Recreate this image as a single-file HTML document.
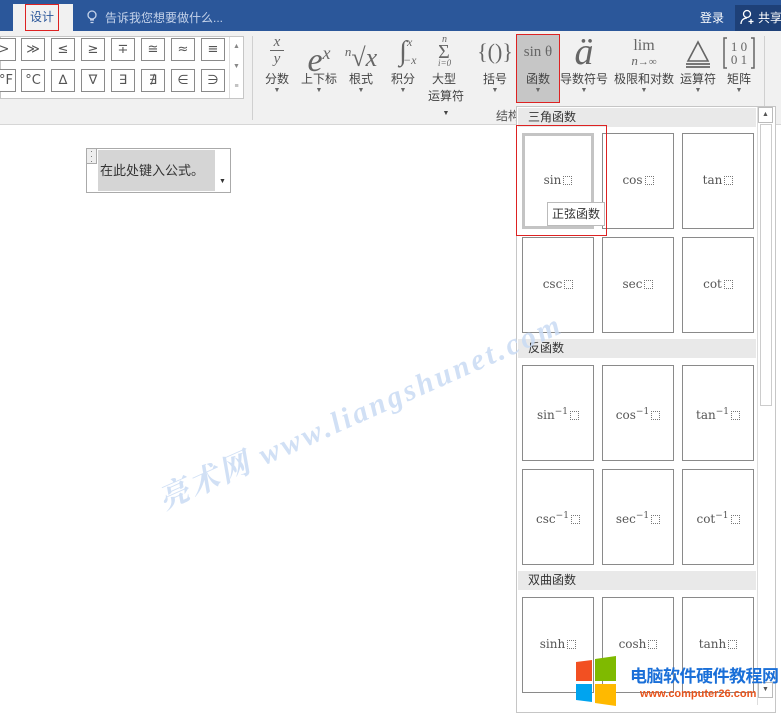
<!DOCTYPE html>
<html><head><meta charset="utf-8"><style>
*{margin:0;padding:0;box-sizing:border-box}
body{width:781px;height:713px;overflow:hidden;position:relative;background:#fff;font-family:"Liberation Sans","Noto Sans CJK SC",sans-serif;font-size:12px;color:#444}
.a{position:absolute}
.sym{position:absolute;width:24px;height:23px;border:1px solid #8a8a8a;background:#fff;text-align:center;line-height:21px;font-size:13px;color:#555;font-family:"DejaVu Sans",sans-serif}
.btn{position:absolute;top:34px;text-align:center;color:#444;font-size:12px}
.btn .ic{height:36px;font-family:"Liberation Serif",serif;color:#666;line-height:36px;position:relative;overflow:visible}
.btn .ar{font-size:7px;color:#666;line-height:8px}
.cell{position:absolute;width:72px;height:96px;border:1px solid #8a8a8a;background:#fff;text-align:center;line-height:92px;font-family:"DejaVu Serif","Liberation Serif",serif;font-size:12px;color:#555}
.bx{display:inline-block;width:9px;height:9px;border:1px dotted #777;vertical-align:-1px;margin-left:2px}
.hd{position:absolute;left:518px;width:238px;height:19px;background:#e9e9e9;padding-left:10px;line-height:19px;font-size:12px;color:#333}
</style></head><body>
<div class="a" style="left:0;top:0;width:781px;height:31px;background:#2b579a"></div>
<div class="a" style="left:13px;top:4px;width:60px;height:27px;background:#f1f1f1"></div>
<div class="a" style="left:25px;top:4px;width:34px;height:27px;border:1px solid #d22;text-align:center;line-height:24px;color:#2b579a">设计</div>
<svg class="a" style="left:87px;top:10px" width="10" height="14"><circle cx="5" cy="5" r="4" fill="none" stroke="#c5d3ea" stroke-width="1.3"/><path d="M3 10h4M3.5 12.5h3" stroke="#c5d3ea" stroke-width="1.3"/></svg>
<div class="a" style="left:105px;top:9px;color:#c5d3ea;font-size:12px">告诉我您想要做什么...</div>
<div class="a" style="left:700px;top:9px;color:#fff;font-size:12px">登录</div>
<div class="a" style="left:735px;top:5px;width:46px;height:26px;background:#1e4077"></div>
<svg class="a" style="left:740px;top:9px" width="16" height="16"><circle cx="7" cy="5" r="3.5" fill="none" stroke="#fff" stroke-width="1.3"/><path d="M1 15c0-4 3-6 6-6M11 10v5M8.5 12.5h5" stroke="#fff" stroke-width="1.3" fill="none"/></svg>
<div class="a" style="left:758px;top:9px;color:#fff;font-size:12px;white-space:nowrap">共享</div>
<div class="a" style="left:0;top:31px;width:781px;height:94px;background:#f1f1f1;border-bottom:1px solid #d6d6d6"></div>
<div class="a" style="left:0;top:36px;width:244px;height:63px;border:1px solid #c6c6c6;background:#fff"></div>
<div class="sym" style="left:-8px;top:38px">&gt;</div><div class="sym" style="left:21px;top:38px">≫</div><div class="sym" style="left:51px;top:38px">≤</div><div class="sym" style="left:81px;top:38px">≥</div><div class="sym" style="left:111px;top:38px">∓</div><div class="sym" style="left:141px;top:38px">≅</div><div class="sym" style="left:171px;top:38px">≈</div><div class="sym" style="left:201px;top:38px">≡</div>
<div class="sym" style="left:-8px;top:69px;text-align:right;padding-right:2px">°F</div><div class="sym" style="left:21px;top:69px">°C</div><div class="sym" style="left:51px;top:69px">∆</div><div class="sym" style="left:81px;top:69px">∇</div><div class="sym" style="left:111px;top:69px">∃</div><div class="sym" style="left:141px;top:69px">∄</div><div class="sym" style="left:171px;top:69px">∈</div><div class="sym" style="left:201px;top:69px">∋</div>
<div class="a" style="left:229px;top:37px;width:14px;height:61px;border-left:1px solid #ddd;font-size:7px;color:#888;text-align:center;line-height:20px">▲<br>▼<br>≡</div>
<div class="a" style="left:252px;top:36px;width:1px;height:84px;background:#d0d0d0"></div>
<div class="a" style="left:764px;top:36px;width:1px;height:72px;background:#d0d0d0"></div>
<div class="a" style="left:270px;top:34px;font-family:'Liberation Serif',serif;font-style:italic;color:#666;font-size:15px;line-height:16px;text-align:center;width:14px">x<div style="border-top:1px solid #666;height:1px"></div>y</div>
<div class="btn" style="left:262px;width:30px"><div class="ic"></div><div>分数</div><div class="ar">▼</div></div>
<div class="btn" style="left:298px;width:42px"><div class="ic" style="font-style:italic;font-size:34px;line-height:38px">e<span style="font-size:18px;vertical-align:12px">x</span></div><div>上下标</div><div class="ar">▼</div></div>
<div class="btn" style="left:343px;width:36px"><div class="ic" style="font-style:italic;font-size:26px"><span style="font-size:13px;vertical-align:10px">n</span>√x</div><div>根式</div><div class="ar">▼</div></div>
<div class="btn" style="left:387px;width:32px"><div class="ic" style="font-size:28px">∫<span style="font-size:12px;font-style:italic;position:absolute;left:20px;top:-10px">x</span><span style="font-size:12px;font-style:italic;position:absolute;left:16px;top:8px">−x</span></div><div>积分</div><div class="ar">▼</div></div>
<div class="btn" style="left:424px;width:40px"><div class="ic" style="font-size:20px;line-height:36px"><span style="font-size:10px;font-style:italic;position:absolute;left:18px;top:-12px">n</span>Σ<span style="font-size:9px;font-style:italic;position:absolute;left:14px;top:11px">i=0</span></div><div>大型</div><div style="font-size:12px;margin-left:4px">运算符 <span style="font-size:7px">▼</span></div></div>
<div class="btn" style="left:476px;width:38px"><div class="ic" style="font-size:22px">{()}</div><div>括号</div><div class="ar">▼</div></div>
<div class="a" style="left:516px;top:34px;width:44px;height:69px;background:#c6c6c6;border:1px solid #d22"></div>
<div class="btn" style="left:516px;width:44px"><div class="ic" style="font-size:15px">sin θ</div><div>函数</div><div class="ar">▼</div></div>
<div class="btn" style="left:558px;width:52px"><div class="ic" style="font-style:italic;font-size:38px">ä</div><div>导数符号</div><div class="ar">▼</div></div>
<div class="btn" style="left:612px;width:64px"><div class="ic" style="font-size:16px;line-height:15px;padding-top:4px">lim<br><i style="font-size:13px">n</i><span style="font-size:11px">→∞</span></div><div>极限和对数</div><div class="ar">▼</div></div>
<div class="btn" style="left:677px;width:42px"><div class="ic"><svg width="30" height="32" style="margin-top:4px"><path d="M15 4L5 23H25Z" fill="none" stroke="#666" stroke-width="1.6"/><path d="M3 26H27M3 29H27" stroke="#666" stroke-width="1.8"/></svg></div><div>运算符</div><div class="ar">▼</div></div>
<div class="btn" style="left:720px;width:38px"><div class="ic"><svg width="34" height="34" style="margin-top:2px"><path d="M5 2H2V32H5M29 2H32V32H29" fill="none" stroke="#666" stroke-width="1.5"/><text x="17" y="15" font-size="13" text-anchor="middle" fill="#666" font-family="Liberation Serif">1 0</text><text x="17" y="28" font-size="13" text-anchor="middle" fill="#666" font-family="Liberation Serif">0 1</text></svg></div><div>矩阵</div><div class="ar">▼</div></div>
<div class="a" style="left:496px;top:107px;color:#555">结构</div>
<div class="a" style="left:86px;top:148px;width:145px;height:45px;border:1px solid #aaa;background:#fff"></div>
<div class="a" style="left:86px;top:148px;width:11px;height:16px;border:1px solid #aaa;background:#eee;font-size:8px;line-height:5px;text-align:center;color:#444">·<br>·<br>·</div>
<div class="a" style="left:98px;top:150px;width:117px;height:41px;background:#d5d5d5;line-height:42px;font-size:13px;color:#333;padding-left:2px">在此处键入公式。</div>
<div class="a" style="left:219px;top:178px;font-size:7px;color:#333">▼</div>
<div class="a" style="left:516px;top:106px;width:260px;height:607px;background:#fff;border:1px solid #c6c6c6"></div>
<div class="a" style="left:757px;top:107px;width:17px;height:598px;border-left:1px solid #ddd;background:#fff"></div>
<div class="a" style="left:758px;top:107px;width:15px;height:16px;border:1px solid #bbb;font-size:7px;text-align:center;line-height:14px;color:#555">▲</div>
<div class="a" style="left:760px;top:124px;width:12px;height:282px;background:#fff;border:1px solid #ccc"></div>
<div class="hd" style="top:108px">三角函数</div>
<div class="cell" style="left:522px;top:133px;border:3px solid #c4c4c4;line-height:88px">sin<span class="bx"></span></div>
<div class="cell" style="left:602px;top:133px">cos<span class="bx"></span></div>
<div class="cell" style="left:682px;top:133px">tan<span class="bx"></span></div>
<div class="cell" style="left:522px;top:237px">csc<span class="bx"></span></div>
<div class="cell" style="left:602px;top:237px">sec<span class="bx"></span></div>
<div class="cell" style="left:682px;top:237px">cot<span class="bx"></span></div>
<div class="a" style="left:516px;top:125px;width:91px;height:111px;border:1px solid #d22"></div>
<div class="a" style="left:547px;top:202px;width:58px;height:24px;background:#fff;border:1px solid #bbb;line-height:22px;text-align:center;color:#333">正弦函数</div>
<div class="hd" style="top:339px">反函数</div>
<div class="cell" style="left:522px;top:365px">sin<sup style="font-size:9px">−1</sup><span class="bx"></span></div>
<div class="cell" style="left:602px;top:365px">cos<sup style="font-size:9px">−1</sup><span class="bx"></span></div>
<div class="cell" style="left:682px;top:365px">tan<sup style="font-size:9px">−1</sup><span class="bx"></span></div>
<div class="cell" style="left:522px;top:469px">csc<sup style="font-size:9px">−1</sup><span class="bx"></span></div>
<div class="cell" style="left:602px;top:469px">sec<sup style="font-size:9px">−1</sup><span class="bx"></span></div>
<div class="cell" style="left:682px;top:469px">cot<sup style="font-size:9px">−1</sup><span class="bx"></span></div>
<div class="hd" style="top:571px">双曲函数</div>
<div class="cell" style="left:522px;top:597px">sinh<span class="bx"></span></div>
<div class="cell" style="left:602px;top:597px">cosh<span class="bx"></span></div>
<div class="cell" style="left:682px;top:597px">tanh<span class="bx"></span></div>
<div class="a" style="left:758px;top:682px;width:15px;height:16px;border:1px solid #bbb;font-size:7px;text-align:center;line-height:14px;color:#555;background:#fff">▼</div>
<!-- watermark on top -->
<div class="a" style="left:150px;top:478px;transform:rotate(-24deg);transform-origin:left top;color:#c9dbf4;font-size:30px;font-weight:bold;font-style:italic;font-family:'Liberation Serif','Noto Serif CJK SC',serif;white-space:nowrap;letter-spacing:3px;opacity:.85">亮术网 www.liangshunet.com</div>
<svg class="a" style="left:576px;top:656px" width="52" height="50"><path d="M0 6L16 4V25H0Z" fill="#f25022"/><path d="M19 3L40 0V25H19Z" fill="#7fba00"/><path d="M0 28H16V46L0 44Z" fill="#00a4ef"/><path d="M19 28H40V50L19 47Z" fill="#ffb900"/></svg>
<div class="a" style="left:630px;top:662px;color:#1a6fd8;font-weight:bold;font-size:17px;letter-spacing:-0.5px">电脑软件硬件教程网</div>
<div class="a" style="left:640px;top:688px;color:#e8541c;font-weight:bold;font-size:11px">www.computer26.com</div>
</body></html>
